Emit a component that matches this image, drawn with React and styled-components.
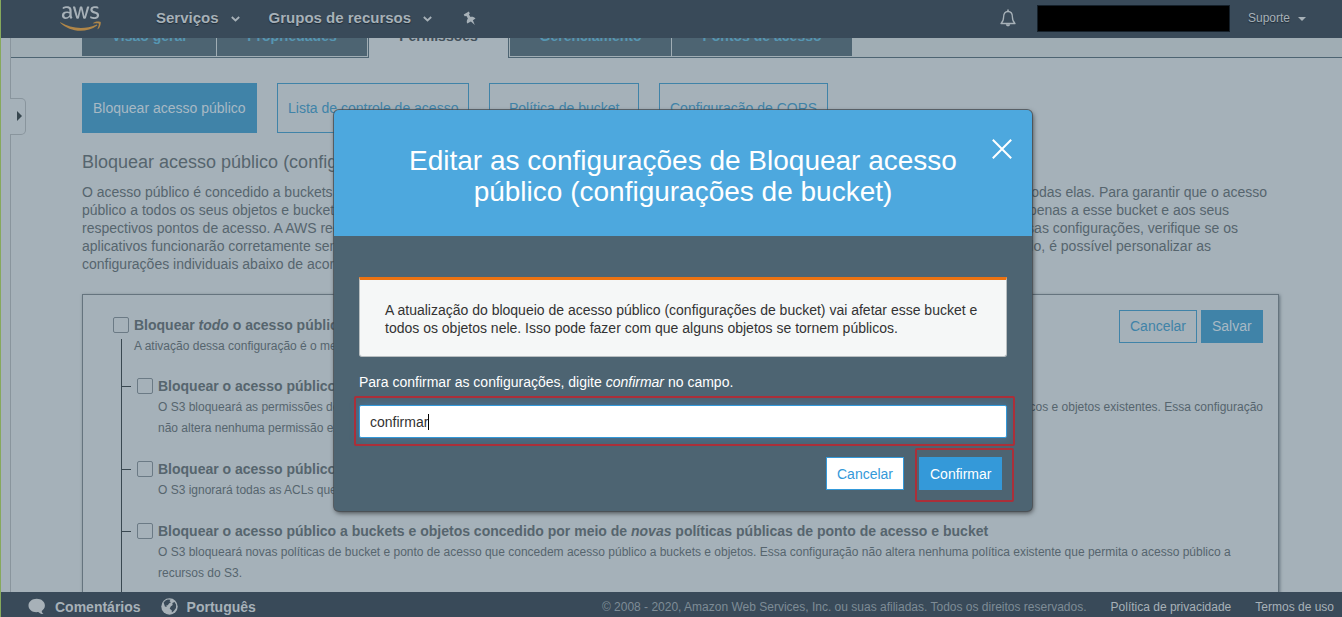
import React from "react";
import styled, { createGlobalStyle, css } from "styled-components";

const Global = createGlobalStyle`
  * { box-sizing: border-box; }
  html, body { margin: 0; padding: 0; overflow: hidden; }
  body { background: #a5b1b9; font: 14px/18px "Liberation Sans", Arial, sans-serif; color: #56656e; }
`;

const Page = styled.div`
  position: relative;
  display: flex;
  flex-direction: column;
  width: 1342px;
  height: 617px;
  overflow: hidden;
  background: #a5b1b9;
  border-left: 1px solid #86a95c;
`;

const TopBar = styled.header`
  display: flex;
  align-items: center;
  flex: none;
  height: 38px;
  padding: 0 35px 2px 59px;
  background: #394a59;
  color: #a7b1b8;
  z-index: 1;
`;
const LogoSvg = styled.svg`
  display: block;
  flex: none;
  width: 41px;
  height: 25px;
  margin: 0 55px 0 0;
`;
const NavItem = styled.div`
  display: flex;
  align-items: center;
  font-size: 15px;
  font-weight: 700;
  white-space: nowrap;
  text-shadow: 0 1px 1px #1f2b36;
  margin-right: ${(p) => p.$gap}px;
  svg { margin: 2px 0 0 12px; }
`;
const Spacer = styled.div`flex: 1;`;
const Redacted = styled.div`
  width: 193px;
  height: 27px;
  margin: 1px 18px 0 21px;
  background: #000;
  border: 1px solid #15202a;
`;
const Support = styled.div`
  display: flex;
  align-items: center;
  font-size: 12px;
  text-shadow: 0 1px 1px #1f2b36;
`;
const Caret = styled.i`
  margin: 1px 1px 0 8px;
  border: 4px solid transparent;
  border-top: 4px solid #a7b1b8;
  border-bottom: 0;
`;

const Body = styled.div`
  display: flex;
  flex: 1;
  min-height: 0;
`;
const Rail = styled.aside`
  display: flex;
  flex-direction: column;
  flex: none;
  width: 25px;
`;
const RailLine = styled.div`
  width: 10px;
  height: ${(p) => (p.$h ? p.$h + "px" : "auto")};
  flex: ${(p) => (p.$h ? "none" : 1)};
  border-right: 1px solid #89959d;
`;
const RailHandle = styled.div`
  display: flex;
  align-items: center;
  width: 16px;
  height: 37px;
  margin-left: 9px;
  padding: 0 0 2px 7px;
  border: 1px solid #89959d;
  border-left: 0;
  border-radius: 0 5px 5px 0;
`;
const Arrow = styled.i`
  border: 5px solid transparent;
  border-left-color: #37474f;
  border-right: 0;
`;

const Main = styled.main`
  flex: 1;
  min-width: 0;
  margin-left: -15px;
  display: flex;
  flex-direction: column;
`;
const Tabs = styled.nav`
  display: flex;
  flex: none;
  height: 20px;
  padding-left: 71px;
  background: #a0adb4;
`;
const Tab = styled.div`
  width: ${(p) => p.$w}px;
  height: 18px;
  margin-right: ${(p) => p.$gap || 0}px;
  background: #4d6472;
  color: #5596b2;
  font-weight: 700;
  line-height: 18px;
  text-align: center;
  span { display: block; margin-top: -11px; }
`;
const ActiveTab = styled(Tab)`
  height: 20px;
  background: #a5b1b9;
  color: #42505a;
  border: solid #4d6472;
  border-width: 0 1px;
`;
const TabUnderline = styled.div`
  width: ${(p) => (p.$w ? p.$w + "px" : "auto")};
  flex: ${(p) => (p.$w ? "none" : 1)};
  height: 1px;
  background: #4d6472;
`;
const UnderlineRow = styled.div`
  display: flex;
  justify-content: space-between;
  flex: none;
  margin-top: -1px;
`;

const Content = styled.div`padding: 25px 63px 0 71px;`;
const Pills = styled.div`display: flex; gap: 20px;`;
const Pill = styled.div`
  height: 50px;
  width: ${(p) => p.$w}px;
  padding-left: 10px;
  border: 1px solid #4083a8;
  line-height: 48px;
  white-space: nowrap;
  color: #4083a8;
  ${(p) => p.$wide && css`padding-left: 19px;`}
  ${(p) => p.$on && css`background: #4083a8; color: #a8b9c4;`}
`;
const Heading = styled.h2`
  margin: 18px 0 0;
  font-size: 18px;
  line-height: 22px;
  font-weight: 400;
`;
const Intro = styled.div`margin-top: 10px;`;
const SplitLine = styled.div`
  display: flex;
  justify-content: space-between;
  width: ${(p) => p.$w}px;
  white-space: nowrap;
`;

const Card = styled.section`
  display: flex;
  align-items: flex-start;
  height: 330px;
  width: 1197px;
  margin-top: 21px;
  padding: 15px 15px 0 30px;
  border: 1px solid #65747e;
  box-shadow: 1px 1px 3px #65747e;
`;
const Options = styled.div`
  flex: 1;
  min-width: 0;
  padding-top: 5px;
`;
const Option = styled.div`
  display: flex;
  gap: 5px;
`;
const Check = styled.div`
  flex: none;
  width: 16px;
  height: 16px;
  margin-top: 2px;
  border: 1px solid #6b7a85;
  border-radius: 2px;
`;
const Children = styled.div`
  margin-left: 8px;
  margin-top: -18px;
  padding-top: 37px;
  height: 400px;
  border-left: 1px solid #3a4851;
`;
const Child = styled(Option)`
  margin-bottom: 20px;
  gap: 0;
`;
const Tick = styled.div`
  flex: none;
  width: 9px;
  height: 1px;
  margin: 10px 6px 0 0;
  background: #3a4851;
`;
const OptText = styled.div`
  flex: none;
  margin-left: ${(p) => p.$ml || 0}px;
  white-space: nowrap;
`;
const OptTitle = styled.div`
  font-weight: 700;
  line-height: 21px;
`;
const OptDesc = styled.div`
  font-size: 12px;
  line-height: 21px;
`;
const Actions = styled.div`
  display: flex;
  gap: ${(p) => p.$gap}px;
  justify-content: flex-end;
`;
const Button = styled.button`
  height: 33px;
  width: ${(p) => p.$w}px;
  padding: 0 0 ${(p) => p.$pb || 0}px 10px;
  text-align: left;
  font: 14px "Liberation Sans", Arial, sans-serif;
  border: 1px solid ${(p) => p.$c};
  color: ${(p) => p.$fg || p.$c};
  background: ${(p) => p.$bg || "transparent"};
`;

const Footer = styled.footer`
  display: flex;
  align-items: center;
  flex: none;
  height: 25px;
  padding: 5px 8px 0 27px;
  background: #394a59;
  color: #a7b1b8;
  font-size: 12px;
  z-index: 1;
`;
const FootItem = styled.div`
  display: flex;
  align-items: center;
  gap: 9px;
  margin-right: 20px;
  font-size: 14px;
  font-weight: 700;
  svg { margin-top: -1px; }
`;
const Copyright = styled.span`
  margin-left: auto;
  color: #7e8c96;
`;
const FootLink = styled.span`margin-left: 24px;`;

const Modal = styled.div`
  position: absolute;
  z-index: 2;
  left: 333px;
  top: 110px;
  width: 698px;
  height: 401px;
  border-radius: 5px;
  background: #4d6472;
  box-shadow: 0 0 0 1px rgba(70, 75, 80, 0.75), 1px 2px 5px rgba(0, 0, 0, 0.6);
`;
const ModalHead = styled.div`
  display: flex;
  justify-content: center;
  align-items: flex-start;
  height: 126px;
  padding: 35px 20px 0 75px;
  border-radius: 5px 5px 0 0;
  background: #4da8de;
  color: #fff;
`;
const ModalTitle = styled.h1`
  flex: 1;
  margin: 0;
  font-size: 28px;
  line-height: 31px;
  font-weight: 400;
  text-align: center;
  white-space: nowrap;
`;
const CloseSvg = styled.svg`
  flex: none;
  width: 20px;
  height: 20px;
  margin: -6px 0 0 35px;
`;
const ModalBody = styled.div`padding: 41px 25px 0;`;
const Alert = styled.div`
  height: 80px;
  padding: 21px 25px 0;
  border: 1px solid #b9bfc1;
  border-top: 3px solid #ec7211;
  border-radius: 0 0 3px 3px;
  background: #f5f7f7;
  color: #333;
`;
const Label = styled.div`
  margin: 16px 0 14px;
  color: #fff;
`;
const Field = styled.div`
  display: flex;
  align-items: center;
  height: 33px;
  margin-bottom: 19px;
  padding-left: 10px;
  border: 1px solid #3499d9;
  border-radius: 2px;
  background: #fff;
  color: #333;
  box-shadow: 0 0 8px rgba(70, 120, 165, 0.9);
`;
const Cursor = styled.i`width: 1px; height: 16px; background: #000;`;
const ModalActions = styled(Actions)`padding-right: 5px;`;
const Mark = styled.div`
  position: absolute;
  z-index: 3;
  left: ${(p) => p.$x}px;
  top: ${(p) => p.$y}px;
  width: ${(p) => p.$w}px;
  height: ${(p) => p.$h}px;
  border: 2px solid #ab2f39;
  border-radius: 2px;
`;

const Chevron = () => (
  <svg width="9" height="6" viewBox="0 0 9 6">
    <path d="M.8 1 4.500 4.500 8.200 1" fill="none" stroke="#a7b1b8" strokeWidth="1.8" />
  </svg>
);

const Logo = () => (
  <LogoSvg viewBox="0 0 304 182" preserveAspectRatio="none">
    <path fill="#a7b1b8" d="M86.400 66.400c0 3.700.4 6.700 1.100 8.900.8 2.200 1.800 4.600 3.200 7.200.5.8.7 1.600.7 2.300 0 1-.6 2-1.900 3l-6.300 4.200c-.9.6-1.800.9-2.600.9-1 0-2-.5-3-1.400-1.400-1.500-2.600-3.100-3.600-4.700-1-1.700-2-3.600-3.100-5.900-7.800 9.200-17.600 13.800-29.400 13.800-8.400 0-15.100-2.400-20-7.200-4.900-4.800-7.400-11.200-7.400-19.200 0-8.500 3-15.400 9.100-20.600 6.100-5.200 14.200-7.800 24.500-7.800 3.400 0 6.900.3 10.600.8 3.700.5 7.500 1.300 11.500 2.200v-7.300c0-7.600-1.600-12.900-4.700-16-3.200-3.100-8.600-4.600-16.300-4.600-3.500 0-7.100.4-10.800 1.300-3.700.9-7.300 2-10.800 3.400-1.600.7-2.800 1.100-3.500 1.300-.7.2-1.200.3-1.600.3-1.400 0-2.100-1-2.100-3.100v-4.900c0-1.600.2-2.800.7-3.500.5-.7 1.400-1.400 2.800-2.100 3.500-1.800 7.700-3.300 12.600-4.500C41 1.900 46.200 1.300 51.700 1.300c11.900 0 20.600 2.700 26.200 8.100 5.500 5.400 8.300 13.600 8.300 24.600v32.400zM45.800 81.600c3.300 0 6.700-.6 10.300-1.800 3.600-1.200 6.800-3.400 9.500-6.400 1.600-1.900 2.800-4 3.400-6.400.6-2.400 1-5.300 1-8.700v-4.200c-2.900-.7-6-1.300-9.200-1.700-3.200-.4-6.300-.6-9.400-.6-6.700 0-11.600 1.300-14.900 4-3.300 2.700-4.900 6.500-4.900 11.500 0 4.700 1.200 8.200 3.700 10.600 2.400 2.500 5.900 3.700 10.500 3.700zM126.100 92.400c-1.800 0-3-.3-3.800-1-.8-.6-1.500-2-2.100-3.900L96.700 10.200c-.6-2-.9-3.300-.9-4 0-1.600.8-2.500 2.400-2.500h9.800c1.900 0 3.200.3 3.900 1 .8.6 1.400 2 2 3.900l16.800 66.200 15.600-66.200c.5-2 1.100-3.300 1.900-3.900.8-.6 2.200-1 4-1h8c1.900 0 3.200.3 4 1 .8.6 1.500 2 1.900 3.900l15.800 67 17.300-67c.6-2 1.300-3.300 2-3.900.8-.6 2.100-1 3.900-1h9.300c1.600 0 2.500.8 2.500 2.500 0 .5-.1 1-.2 1.600-.1.600-.3 1.400-.7 2.500l-24.100 77.300c-.6 2-1.300 3.300-2.100 3.900-.8.6-2.100 1-3.800 1h-8.600c-1.900 0-3.200-.3-4-1-.8-.7-1.500-2-1.900-4L156 23l-15.400 64.400c-.5 2-1.100 3.300-1.900 4-.8.700-2.200 1-4 1zM254.600 95.100c-5.200 0-10.400-.6-15.400-1.800-5-1.200-8.900-2.500-11.500-4-1.600-.9-2.700-1.900-3.100-2.800-.4-.9-.6-1.900-.6-2.800v-5.100c0-2.100.8-3.100 2.300-3.100.6 0 1.200.1 1.800.3.600.2 1.500.6 2.500 1 3.400 1.500 7.100 2.700 11 3.500 4 .8 7.900 1.200 11.900 1.200 6.300 0 11.200-1.100 14.600-3.300 3.400-2.200 5.200-5.400 5.200-9.500 0-2.800-.9-5.100-2.700-7-1.800-1.900-5.200-3.600-10.100-5.200L246 52c-7.300-2.300-12.700-5.700-16-10.200-3.300-4.400-5-9.300-5-14.500 0-4.200.9-7.900 2.700-11.100 1.800-3.200 4.200-6 7.200-8.200 3-2.300 6.400-4 10.400-5.200 4-1.200 8.200-1.700 12.600-1.700 2.200 0 4.500.1 6.700.4 2.300.3 4.400.7 6.500 1.100 2 .5 3.900 1 5.700 1.600 1.800.6 3.200 1.200 4.200 1.800 1.400.8 2.400 1.600 3 2.500.6.800.9 1.900.9 3.300v4.700c0 2.100-.8 3.200-2.300 3.200-.8 0-2.100-.4-3.800-1.200-5.700-2.600-12.100-3.900-19.200-3.900-5.700 0-10.200.9-13.300 2.800-3.100 1.900-4.700 4.800-4.700 8.900 0 2.800 1 5.200 3 7.100 2 1.900 5.700 3.800 11 5.500l14.200 4.500c7.200 2.300 12.400 5.500 15.500 9.600 3.100 4.100 4.600 8.800 4.600 14 0 4.300-.9 8.200-2.600 11.600-1.800 3.400-4.200 6.400-7.300 8.800-3.100 2.500-6.800 4.300-11.100 5.600-4.500 1.400-9.200 2.100-14.300 2.100z"/>
    <path fill="#b08648" d="M273.500 143.700c-32.900 24.300-80.700 37.200-121.800 37.200-57.600 0-109.500-21.300-148.700-56.700-3.100-2.800-.3-6.600 3.400-4.400 42.400 24.600 94.700 39.500 148.800 39.500 36.500 0 76.600-7.600 113.500-23.200 5.500-2.500 10.200 3.600 4.800 7.600zM287.200 128.100c-4.200-5.400-27.800-2.600-38.500-1.300-3.200.4-3.700-2.400-.8-4.500 18.800-13.200 49.700-9.400 53.300-5 3.600 4.500-1 35.400-18.600 50.200-2.700 2.300-5.300 1.100-4.100-1.900 4-9.900 12.900-32.200 8.700-37.500z"/>
  </LogoSvg>
);

const Pin = () => (
  <svg width="13" height="15" viewBox="0 0 13 15">
    <path d="M.7 3.400 5.900.6l.9 1.900-.9 1 1.600 2.400c2-.4 3.700.1 5 1.700L9.900 9.300l1.900 4.800L7.900 10.400l-3.700 2.200c-.8-1.800-.5-3.500.7-5L3.400 4.900l-1.700.3z" fill="#a7b1b8" />
  </svg>
);

const Bell = () => (
  <svg width="16" height="18" viewBox="0 0 16 18">
    <path d="M1 14.500c2-1.700 2.600-3 2.600-6.400 0-3.500 1.500-5.600 4.400-5.600s4.400 2.100 4.400 5.600c0 3.400.6 4.700 2.600 6.400z" fill="none" stroke="#a7b1b8" strokeWidth="1.300" strokeLinejoin="round" />
    <path d="M7.200.6h1.600v2H7.200zM5.800 15.200h4.400c-.2 1.400-1 2.100-2.200 2.100s-2-.7-2.200-2.100z" fill="#a7b1b8" />
  </svg>
);

const Bubble = () => (
  <svg width="18" height="17" viewBox="0 0 18 17">
    <path d="M8.700.8c4.700 0 8.200 2.900 8.200 6.700 0 2.300-1.200 4.200-3.200 5.400.2 1.300.8 2.300 1.900 3.200-2.200.1-3.900-.6-5.300-2-5.500.9-9.800-2.200-9.800-6.600C.5 3.700 4 .8 8.700.8z" fill="#a7b1b8" />
  </svg>
);

const Globe = () => (
  <svg width="17" height="17" viewBox="0 0 17 17">
    <circle cx="8.500" cy="8.500" r="8.200" fill="#a7b1b8" />
    <path d="M2.600 4.600 4.500 2.600 6.800 1.500 9.600 1.700 8.500 3.200 10 4.200 8 5.600 6.800 7.300 5.200 7.600 5.800 9 3.900 8.600zM9.700 8.600l2-1.700-.4-1.900 2.300-.9 1.500 2.700-.1 3.300-2.200 3-1.900 1.400-.2-2.300-2-1.500z" fill="#394a59" />
  </svg>
);

const introLines = [
  [1185, "O acesso público é concedido a buckets e objetos por meio", "todas elas. Para garantir que o acesso"],
  [1147, "público a todos os seus objetos e buckets do S3 seja", "apenas a esse bucket e aos seus"],
  [1156, "respectivos pontos de acesso. A AWS recomenda ativar", "essas configurações, verifique se os"],
  [1129, "aplicativos funcionarão corretamente sem o acesso", "conteúdo, é possível personalizar as"],
  [1129, "configurações individuais abaixo de acordo com", ""],
];

export default function App() {
  return (
    <>
      <Global />
      <Page>
        <TopBar>
          <Logo />
          <NavItem $gap={29}>Serviços <Chevron /></NavItem>
          <NavItem $gap={31}>Grupos de recursos <Chevron /></NavItem>
          <Pin />
          <Spacer />
          <Bell />
          <Redacted />
          <Support>Suporte <Caret /></Support>
        </TopBar>

        <Body>
          <Rail>
            <RailLine $h={60} />
            <RailHandle><Arrow /></RailHandle>
            <RailLine />
          </Rail>
          <Main>
            <Tabs>
              <Tab $w={134} $gap={1}><span>Visão geral</span></Tab>
              <Tab $w={150} $gap={1}><span>Propriedades</span></Tab>
              <ActiveTab $w={141} $gap={1}><span>Permissões</span></ActiveTab>
              <Tab $w={161} $gap={1}><span>Gerenciamento</span></Tab>
              <Tab $w={180}><span>Pontos de acesso</span></Tab>
            </Tabs>
            <UnderlineRow>
              <TabUnderline $w={358} />
              <TabUnderline $w={834} />
            </UnderlineRow>
            <Content>
              <Pills>
                <Pill $w={175} $on>Bloquear acesso público</Pill>
                <Pill $w={192}>Lista de controle de acesso</Pill>
                <Pill $w={150} $wide>Política de bucket</Pill>
                <Pill $w={169}>Configuração de CORS</Pill>
              </Pills>
              <Heading>Bloquear acesso público (configurações</Heading>
              <Intro>
                {introLines.map(([w, a, b]) => (
                  <SplitLine key={a} $w={w}><span>{a}</span><span>{b}</span></SplitLine>
                ))}
              </Intro>
              <Card>
                <Options>
                  <Option>
                    <Check />
                    <OptText>
                      <OptTitle>Bloquear <em>todo</em> o acesso público</OptTitle>
                      <OptDesc>A ativação dessa configuração é o mesmo que ativar</OptDesc>
                    </OptText>
                  </Option>
                  <Children>
                    <Child>
                      <Tick /><Check />
                      <OptText $ml={5}>
                        <OptTitle>Bloquear o acesso público</OptTitle>
                        <OptDesc>
                          <SplitLine $w={1105}>
                            <span>O S3 bloqueará as permissões de</span>
                            <span>públicos e objetos existentes. Essa configuração</span>
                          </SplitLine>
                          não altera nenhuma permissão existente
                        </OptDesc>
                      </OptText>
                    </Child>
                    <Child>
                      <Tick /><Check />
                      <OptText $ml={5}>
                        <OptTitle>Bloquear o acesso público a buckets e objetos</OptTitle>
                        <OptDesc>O S3 ignorará todas as ACLs que concedem</OptDesc>
                      </OptText>
                    </Child>
                    <Child>
                      <Tick /><Check />
                      <OptText $ml={5}>
                        <OptTitle>
                          Bloquear o acesso público a buckets e objetos concedido por meio de <em>novas</em> políticas públicas de ponto de acesso e bucket
                        </OptTitle>
                        <OptDesc>
                          O S3 bloqueará novas políticas de bucket e ponto de acesso que concedem acesso público a buckets e objetos. Essa configuração não altera nenhuma política existente que permita o acesso público a
                          <br />
                          recursos do S3.
                        </OptDesc>
                      </OptText>
                    </Child>
                  </Children>
                </Options>
                <Actions $gap={4}>
                  <Button $w={78} $pb={2} $c="#4083a8">Cancelar</Button>
                  <Button $w={62} $pb={2} $c="#4083a8" $bg="#4083a8" $fg="#a8b9c4">Salvar</Button>
                </Actions>
              </Card>
            </Content>
          </Main>
        </Body>

        <Footer>
          <FootItem><Bubble />Comentários</FootItem>
          <FootItem><Globe />Português</FootItem>
          <Copyright>© 2008 - 2020, Amazon Web Services, Inc. ou suas afiliadas. Todos os direitos reservados.</Copyright>
          <FootLink>Política de privacidade</FootLink>
          <FootLink>Termos de uso</FootLink>
        </Footer>

        <Modal>
          <ModalHead>
            <ModalTitle>Editar as configurações de Bloquear acesso<br />público (configurações de bucket)</ModalTitle>
            <CloseSvg viewBox="0 0 20 20">
              <path d="M.8.8 19.200 19.200M19.200.8.8 19.200" stroke="#fff" strokeWidth="2" />
            </CloseSvg>
          </ModalHead>
          <ModalBody>
            <Alert>
              A atualização do bloqueio de acesso público (configurações de bucket) vai afetar esse bucket e todos os objetos nele. Isso pode fazer com que alguns objetos se tornem públicos.
            </Alert>
            <Label>Para confirmar as configurações, digite <em>confirmar</em> no campo.</Label>
            <Field>confirmar<Cursor /></Field>
            <ModalActions $gap={15}>
              <Button $w={78} $c="#3499d9" $bg="#fff">Cancelar</Button>
              <Button $w={83} $c="#3499d9" $bg="#3499d9" $fg="#fff">Confirmar</Button>
            </ModalActions>
          </ModalBody>
        </Modal>
        <Mark $x={353} $y={396} $w={661} $h={50} />
        <Mark $x={914} $y={448} $w={99} $h={54} />
      </Page>
    </>
  );
}
